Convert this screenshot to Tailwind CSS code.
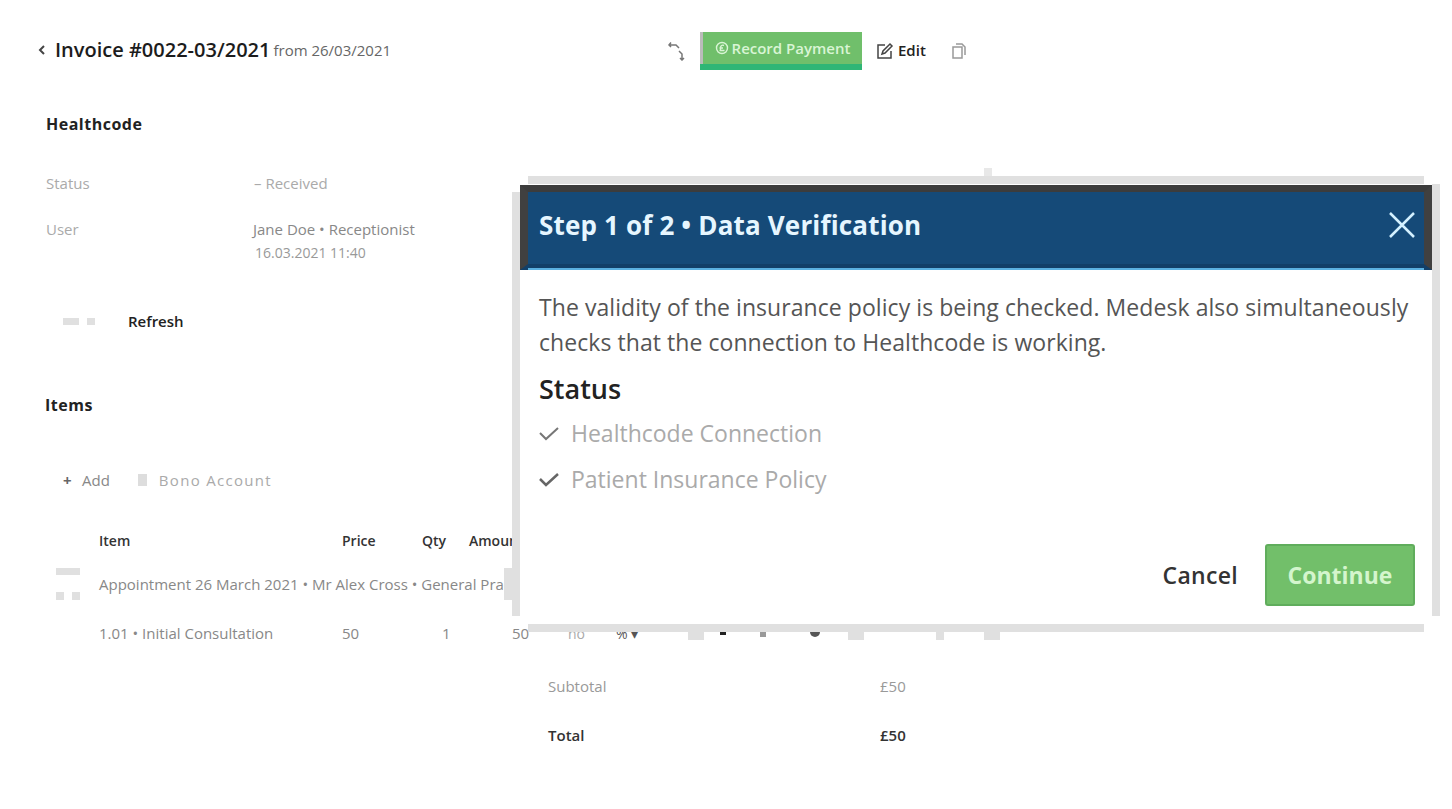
<!DOCTYPE html>
<html lang="en">
<head>
<meta charset="utf-8">
<title>Invoice</title>
<script src="https://cdn.jsdelivr.net/npm/@tailwindcss/browser@4"></script>
</head>
<body class="bg-white">
<div class="relative w-[1452px] h-[809px] overflow-hidden bg-white font-['Open_Sans','Noto_Sans',sans-serif] text-[#222]">

  <!-- Page header -->
  <header class="h-[72px] pt-[32px] flex items-start">
    <div class="w-[668px] h-[36px] pl-[35px] flex items-center">
      <svg class="w-[14px] h-[14px] mr-[6px] text-[#444]" viewBox="0 0 14 14" fill="none" stroke="currentColor" stroke-width="2"><path d="M9 3 5 7l4 4"/></svg>
      <span class="text-[20px] leading-none font-semibold text-[#1c1c1c] whitespace-nowrap">Invoice #0022-03/2021</span>
      <span class="ml-[3px] text-[15px] leading-none font-medium text-[#666] whitespace-nowrap">from 26/03/2021</span>
    </div>
    <div class="flex items-center h-[38px]">
      <svg class="w-[20px] h-[20px] text-[#777]" viewBox="0 0 20 20" fill="none" stroke="currentColor" stroke-width="1.5"><path d="M1 4h7l3 3M3 1.500 1 4l2 2"/><path d="M11 10l3 3v6M12 17l2 2 2-2"/></svg>
      <button class="ml-[12px] w-[162px] h-[38px] flex flex-col">
        <span class="h-[32px] w-full bg-[#70bf6b] border-l-[3px] border-l-[#bbb] flex items-center justify-center text-[15px] font-semibold text-[#d9f5d5] whitespace-nowrap"><svg class="w-[14px] h-[14px] mr-[3px]" viewBox="0 0 14 14" fill="none" stroke="currentColor" stroke-width="1.400"><circle cx="7" cy="7" r="5.500"/><path d="M9 4.500C7 3.500 5 5 5.500 7.500c.3 1.500-.5 2-1 2h5M4.500 7h3.500"/></svg>Record Payment</span>
        <span class="h-[6px] w-full bg-[#2fb676]"></span>
      </button>
      <svg class="ml-[14px] w-[18px] h-[18px] text-[#444]" viewBox="0 0 18 18" fill="none" stroke="currentColor" stroke-width="1.500"><path d="M9 3H2v13h13V9"/><path d="M6 12l1-3 7-7 2 2-7 7z"/></svg>
      <span class="ml-[4px] text-[15px] font-semibold text-[#222] relative -top-px">Edit</span>
      <svg class="ml-[25px] w-[16px] h-[18px] text-[#999]" viewBox="0 0 16 18" fill="none" stroke="currentColor" stroke-width="1.500"><path d="M2 5h9v11H2zM5 2h6l3 3v8"/></svg>
    </div>
  </header>

  <!-- Healthcode -->
  <section class="pl-[46px] pt-[41px]">
    <h2 class="text-[16px] leading-[22px] font-bold tracking-[0.5px] text-[#222]">Healthcode</h2>
    <div class="mt-[38px] flex text-[15px] leading-[20px] text-[#aaa]">
      <span class="w-[208px]">Status</span><span>– Received</span>
    </div>
    <div class="mt-[24px] flex text-[15px] leading-[24px] text-[#888]">
      <span class="w-[207px] text-[#aaa]">User</span>
      <div>
        <div>Jane Doe • Receptionist</div>
        <div class="pl-[2px] text-[#999] text-[14px]">16.03.2021 11:40</div>
      </div>
    </div>
    <div class="mt-[46px] pl-[17px] h-[20px] flex items-center">
      <span class="w-[16px] h-[7px] bg-[#e0e0e0]"></span>
      <span class="ml-[8px] w-[8px] h-[7px] bg-[#e0e0e0]"></span>
      <span class="ml-[33px] text-[15px] font-semibold text-[#222]">Refresh</span>
    </div>
  </section>

  <!-- Items -->
  <section class="pl-[45px] pt-[63px]">
    <h2 class="text-[16px] leading-[22px] font-bold tracking-[0.5px] text-[#222]">Items</h2>
    <div class="mt-[52px] pl-[18px] h-[24px] flex items-center text-[15px] text-[#aaa]">
      <span class="w-[8px] text-center font-bold text-[#666]">+</span>
      <span class="ml-[11px] text-[#888]">Add</span>
      <span class="ml-[28px] w-[9px] h-[12px] bg-[#ddd]"></span>
      <span class="ml-[12px] tracking-[1.300px]">Bono Account</span>
    </div>
    <div class="mt-[39px] ml-[54px] grid grid-cols-[243px_80px_47px_100px] text-[14px] leading-[20px] whitespace-nowrap">
      <span class="font-semibold text-[#333]">Item</span>
      <span class="font-semibold text-[#333]">Price</span>
      <span class="font-semibold text-[#333]">Qty</span>
      <span class="font-semibold text-[#333]">Amount</span>
    </div>
    <div class="relative mt-[23px] ml-[54px] text-[15px] leading-[20px] text-[#888] whitespace-nowrap">Appointment 26 March 2021 • Mr Alex Cross • General Practice</div>
    <div class="mt-[29px] ml-[54px] grid grid-cols-[243px_80px_47px_100px] text-[15px] leading-[20px] text-[#888] whitespace-nowrap">
      <span>1.01 • Initial Consultation</span>
      <span>50</span>
      <span class="pl-[20px]">1</span>
      <span class="pl-[43px]">50</span>
    </div>
    <div class="mt-[33px] ml-[503px] flex w-[360px] text-[15px] leading-[20px] text-[#999]">
      <span class="w-[332px]">Subtotal</span><span>£50</span>
    </div>
    <div class="mt-[29px] ml-[503px] flex w-[360px] text-[15px] leading-[20px] font-semibold text-[#333]">
      <span class="w-[332px]">Total</span><span>£50</span>
    </div>
  </section>

  <!-- Fragments left of and beneath the dialog -->
  <span class="absolute left-[56px] top-[568px] w-[24px] h-[7px] bg-[#e0e0e0]"></span>
  <span class="absolute left-[56px] top-[592px] w-[8px] h-[8px] bg-[#e0e0e0]"></span>
  <span class="absolute left-[72px] top-[592px] w-[8px] h-[8px] bg-[#e0e0e0]"></span>
  <span class="absolute left-[568px] top-[623px] text-[14px] text-[#aaa]">no</span>
  <span class="absolute left-[616px] top-[623px] text-[14px] text-[#555]">% ▾</span>
  <span class="absolute left-[720px] top-[632px] w-[6px] h-[3px] bg-[#222]"></span>
  <span class="absolute left-[760px] top-[632px] w-[6px] h-[5px] bg-[#999]"></span>
  <span class="absolute left-[810px] top-[627px] w-[10px] h-[10px] rounded-full bg-[#555]"></span>
  <span class="absolute left-[688px] top-[632px] w-[16px] h-[8px] bg-[#e0e0e0]"></span>
  <span class="absolute left-[848px] top-[632px] w-[16px] h-[8px] bg-[#e0e0e0]"></span>
  <span class="absolute left-[936px] top-[632px] w-[8px] h-[8px] bg-[#e0e0e0]"></span>
  <span class="absolute left-[984px] top-[632px] w-[16px] h-[8px] bg-[#e0e0e0]"></span>
  <span class="absolute left-[504px] top-[568px] w-[8px] h-[32px] bg-[#e0e0e0]"></span>

  <!-- Dialog -->
  <div class="absolute left-[512px] top-[176px] w-[928px] h-[456px]" role="dialog">
    <span class="absolute left-[16px] top-0 w-[896px] h-[8px] bg-[#e0e0e0]"></span>
    <span class="absolute left-[472px] top-[-8px] w-[8px] h-[8px] bg-[#e8e8e8]"></span>
    <span class="absolute left-0 top-[16px] w-[8px] h-[424px] bg-[#e0e0e0]"></span>
    <span class="absolute right-0 top-[8px] w-[8px] h-[432px] bg-[#e0e0e0]"></span>
    <span class="absolute left-[16px] bottom-0 w-[896px] h-[8px] bg-[#e0e0e0]"></span>

    <div class="absolute left-[8px] top-[9px] w-[912px] h-[439px] bg-white flex flex-col">
      <div class="relative h-[85px] shrink-0 bg-[#154a78] border-t-[7px] border-t-[#3c3c3c] border-x-[8px] border-x-[#404040] border-b-[6px] border-b-[#123f68] flex items-center justify-between pl-[11px] pr-[7px] pb-[6px]">
        <h1 class="text-[26px] tracking-[0.17px] leading-none font-bold text-[#e6f6ff] whitespace-nowrap">Step 1 of 2 • Data Verification</h1>
        <svg class="w-[30px] h-[30px] text-[#d4f1ff]" viewBox="0 0 30 30" fill="none" stroke="currentColor" stroke-width="2.500"><path d="M3 3l24 24M27 3 3 27"/></svg>
        <span class="absolute left-0 right-0 bottom-[-6px] h-[2px] bg-[#5ab0e0]"></span>
      </div>
      <div class="px-[19px] pt-[20px]">
        <p class="text-[23px] tracking-[0.06px] leading-[35px] text-[#555] whitespace-nowrap">The validity of the insurance policy is being checked. Medesk also simultaneously<br>checks that the connection to Healthcode is working.</p>
        <h2 class="mt-[11px] text-[27px] leading-[36px] font-semibold text-[#222]">Status</h2>
        <ul class="mt-[11px] text-[23px] leading-[30px] text-[#aaa]">
          <li class="flex items-center h-[30px]"><svg class="w-[20px] h-[16px] mr-[12px] text-[#777]" viewBox="0 0 20 16" fill="none" stroke="currentColor" stroke-width="2"><path d="M1 8l6 6L19 3"/></svg>Healthcode Connection</li>
          <li class="mt-[16px] flex items-center h-[30px]"><svg class="w-[20px] h-[16px] mr-[12px] text-[#666]" viewBox="0 0 20 16" fill="none" stroke="currentColor" stroke-width="2.500"><path d="M1 8l6 6L19 3"/></svg>Patient Insurance Policy</li>
        </ul>
      </div>
      <div class="mt-auto h-[79px] pr-[17px] pb-[19px] flex items-center justify-end">
        <span class="text-[23px] tracking-[0.3px] font-semibold text-[#333]">Cancel</span>
        <button class="ml-[27px] w-[150px] h-[62px] rounded-[3px] bg-[#72bf6a] border-2 border-[#60ad5c] text-[23px] font-bold text-[#d4f5cd]">Continue</button>
      </div>
    </div>
  </div>
</div>
</body>
</html>
